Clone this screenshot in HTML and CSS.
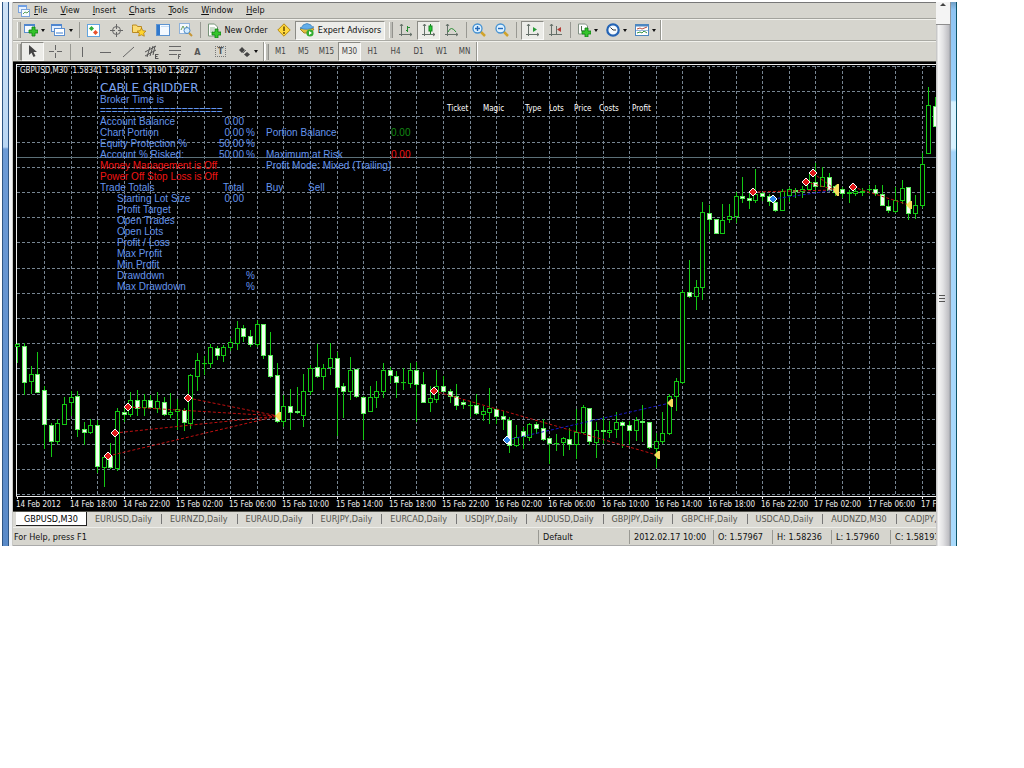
FILE: index.html
```html
<!DOCTYPE html>
<html lang="en">
<head>
<meta charset="utf-8">
<title>GBPUSD,M30</title>
<link rel="stylesheet" href="styles.css">
</head>
<body>
<main class="window">
  <div class="edge edge-left"></div>
  <div class="app">
    <nav class="menu">
      <svg class="menu-logo" width="13" height="13" viewBox="0 0 13 13"><rect x="1.500" y="1.500" width="8" height="7" fill="#e6f1ff" stroke="#7aa3dc"/><rect x="1" y="1" width="9" height="2" fill="#6f9fe4"/><rect x="4.500" y="5.500" width="8" height="7" fill="#f6faff" stroke="#7aa3dc"/><path d="M6 10l2-2 2 1 2-2" stroke="#58a05a" fill="none"/></svg>
      <button><u>F</u>ile</button><button><u>V</u>iew</button><button><u>I</u>nsert</button><button><u>C</u>harts</button><button><u>T</u>ools</button><button><u>W</u>indow</button><button><u>H</u>elp</button>
    </nav>
    <div class="toolbar">
      <i class="grip"></i>
      <button class="tool w26" aria-label="New chart"><svg width="14" height="14" viewBox="0 0 14 14"><rect x=".5" y="1.500" width="10" height="8" fill="#f4f9ff" stroke="#5c8fd0"/><path d="M0 2h11" stroke="#4f86cf" stroke-width="2"/><path d="M8 4h3v3h3v3h-3v3H8v-3H5V7h3z" fill="#35c42b" stroke="#0d7d12" stroke-width=".8"/></svg><i class="caret"></i></button>
      <button class="tool w29" aria-label="Profiles"><svg width="15" height="14" viewBox="0 0 15 14"><rect x=".5" y="1.500" width="10" height="7" fill="#e3efff" stroke="#5c8fd0"/><path d="M0 2h11" stroke="#4f86cf" stroke-width="2"/><rect x="3.500" y="5.500" width="10" height="7" fill="#fff" stroke="#5c8fd0"/><path d="M5 10h7" stroke="#9fc0e8" stroke-width="2"/></svg><i class="caret"></i></button>
      <i class="sep"></i>
      <button class="tool" aria-label="Market watch"><svg width="13" height="13" viewBox="0 0 13 13"><rect x=".5" y=".5" width="12" height="12" fill="#fff" stroke="#62a5df"/><path d="M4.500 2L7 4.500 4.500 7 2 4.500z" fill="#2fae3a"/><path d="M8.500 6L11 8.500 8.500 11 6 8.500z" fill="#e8502c"/></svg></button>
      <button class="tool" aria-label="Data window"><svg width="13" height="13" viewBox="0 0 13 13" fill="none" stroke="#666"><circle cx="6.500" cy="6.500" r="4"/><path d="M6.500 0v5M6.500 8v5M0 6.500h5M8 6.500h5"/></svg></button>
      <button class="tool" aria-label="Navigator"><svg width="15" height="13" viewBox="0 0 15 13"><path d="M.5 2.500V1h4l1 1.500h4v6h-9z" fill="#fbdc74" stroke="#ba8a22"/><path d="M9.500 4l1.400 2.700 3 .4-2.200 2.100.6 3-2.800-1.400L6.700 12l.6-2.900-2.100-2 3-.4z" fill="#ffd52e" stroke="#b07e12" stroke-width=".8"/></svg></button>
      <button class="tool" aria-label="Terminal"><svg width="14" height="12" viewBox="0 0 14 12"><rect x=".5" y=".5" width="13" height="11" fill="#f4f9ff" stroke="#5c93d0"/><rect x="1" y="1" width="3" height="10" fill="#3179cc"/><path d="M5 2.500h8" stroke="#c3dbf5"/></svg></button>
      <button class="tool" aria-label="Strategy tester"><svg width="14" height="14" viewBox="0 0 14 14"><rect x=".5" y=".5" width="10" height="10" fill="#f3f8ff" stroke="#8fb2da"/><path d="M2 7l2-4 2 4 2-4" stroke="#6ea05c" fill="none"/><circle cx="8" cy="7.500" r="3" fill="#d5edff" stroke="#4c8ac6"/><path d="M10 10l3 3" stroke="#c69636" stroke-width="2"/></svg></button>
      <i class="sep"></i>
      <button class="tool w69"><svg width="14" height="15" viewBox="0 0 14 15"><path d="M1.500 1h6l3 3v9h-9z" fill="#fff" stroke="#779378"/><path d="M3 5h5M3 7h4M3 9h3" stroke="#95b896"/><path d="M8 6h3v3h3v3h-3v3H8v-3H5V9h3z" fill="#35c42b" stroke="#0d7d12" stroke-width=".8"/></svg>New Order</button>
      <button class="tool" aria-label="MetaEditor"><svg width="14" height="14" viewBox="0 0 14 14"><path d="M7 .8L13.200 7 7 13.200.8 7z" fill="#ffd93e" stroke="#b98b10"/><path d="M7 3.500v4.500M7 9v2" stroke="#654900" stroke-width="1.500"/></svg></button>
      <button class="tool pressed w87"><svg width="16" height="14" viewBox="0 0 16 14"><path d="M1 6l7-2 7 2-3 4H5z" fill="#e4bf40" stroke="#a98722"/><path d="M1 5q3-1 3-3 4-3 8 0 0 2 3 2-6 4-14 1z" fill="#62aeea" stroke="#347cb9" stroke-width=".7"/><circle cx="11" cy="10" r="3.600" fill="#35ad31"/><path d="M10 8l3 2-3 2z" fill="#fff"/></svg>Expert Advisors</button>
      <i class="grip spaced"></i>
      <button class="tool" aria-label="Bar chart"><svg width="13" height="13" viewBox="0 0 13 13" fill="none"><path d="M2.500 0v12M0 10.500h13M1 2l1.500-2L4 2M11 9l2 1.500-2 1.500" stroke="#66716a"/><path d="M8.500 2v6M7 6.500h2M8 3.500h3" stroke="#278d32"/></svg></button>
      <button class="tool pressed" aria-label="Candlesticks"><svg width="13" height="13" viewBox="0 0 13 13" fill="none"><path d="M2.500 0v12M0 10.500h13M1 2l1.500-2L4 2M11 9l2 1.500-2 1.500" stroke="#66716a"/><path d="M8.500 0v10" stroke="#178223"/><rect x="7" y="2" width="3" height="5" fill="#26cf36" stroke="#178223"/></svg></button>
      <button class="tool" aria-label="Line chart"><svg width="13" height="13" viewBox="0 0 13 13" fill="none"><path d="M2.500 0v12M0 10.500h13M1 2l1.500-2L4 2M11 9l2 1.500-2 1.500" stroke="#66716a"/><path d="M3 8q3-7 8 0" stroke="#278d32"/></svg></button>
      <i class="sep narrow"></i>
      <button class="tool" aria-label="Zoom in"><svg width="14" height="14" viewBox="0 0 14 14"><path d="M8 8l5 5" stroke="#d0a32c" stroke-width="2.500"/><circle cx="5.500" cy="5.500" r="4.500" fill="#dff2ff" stroke="#4692d2" stroke-width="1.300"/><path d="M3 5.500h5M5.500 3v5" stroke="#246aba" stroke-width="1.400"/></svg></button>
      <button class="tool" aria-label="Zoom out"><svg width="14" height="14" viewBox="0 0 14 14"><path d="M8 8l5 5" stroke="#d0a32c" stroke-width="2.500"/><circle cx="5.500" cy="5.500" r="4.500" fill="#dff2ff" stroke="#4692d2" stroke-width="1.300"/><path d="M3 5.500h5" stroke="#246aba" stroke-width="1.400"/></svg></button>
      <i class="sep wide-sep"></i>
      <button class="tool pressed" aria-label="Auto scroll"><svg width="13" height="13" viewBox="0 0 13 13" fill="none"><path d="M2.500 0v12M0 10.500h13M1 2l1.500-2L4 2M11 9l2 1.500-2 1.500" stroke="#66716a"/><path d="M7 3l4 2.500L7 8z" fill="#279b36"/></svg></button>
      <button class="tool" aria-label="Chart shift"><svg width="13" height="13" viewBox="0 0 13 13" fill="none"><path d="M2.500 0v12M0 10.500h13M1 2l1.500-2L4 2M7.500 2v8" stroke="#66716a"/><path d="M12 3v5L8 5.500z" fill="#b33c35"/></svg></button>
      <i class="sep"></i>
      <button class="tool w29" aria-label="Indicators"><svg width="14" height="14" viewBox="0 0 14 14"><path d="M1.500 1h7l2 2v8h-9z" fill="#fff" stroke="#829184"/><path d="M4.500 3v5h3" fill="none" stroke="#4b6f4c"/><path d="M8 5h3v3h3v3h-3v3H8v-3H5V8h3z" fill="#35c42b" stroke="#0d7d12" stroke-width=".8"/></svg><i class="caret"></i></button>
      <button class="tool w29" aria-label="Periods"><svg width="14" height="14" viewBox="0 0 14 14"><circle cx="7" cy="7" r="5.700" fill="#f5fbff" stroke="#2464b5" stroke-width="2.200"/><path d="M4.500 4.500L7 7h3" fill="none" stroke="#333"/></svg><i class="caret"></i></button>
      <button class="tool w29" aria-label="Templates"><svg width="14" height="12" viewBox="0 0 14 12"><rect x=".5" y=".5" width="13" height="11" fill="#fff" stroke="#4c87c1"/><path d="M0 1.500h14" stroke="#4c87c1" stroke-width="2"/><path d="M2 5l3-1 2 1 5-2" stroke="#b65042" fill="none"/><path d="M2 9l3-1 2 1 2-2 3 2" stroke="#369242" fill="none"/><path d="M1 6.500h12" stroke="#98b9dc"/></svg><i class="caret"></i></button>
      <i class="bar-end"></i>
    </div>
    <div class="toolbar second">
      <i class="grip"></i>
      <button class="tool pressed" aria-label="Cursor"><svg width="10" height="13" viewBox="0 0 10 13"><path d="M1 0v10l2.500-2.300L5.500 12l2-1-2-4H9z" fill="#444"/></svg></button>
      <button class="tool" aria-label="Crosshair"><svg width="13" height="13" viewBox="0 0 13 13"><path d="M6.500 0v5M6.500 8v5M0 6.500h5M8 6.500h5" stroke="#666"/></svg></button>
      <i class="sep narrow"></i>
      <button class="tool" aria-label="Vertical line"><svg width="11" height="12"><path d="M5.500 1v10" stroke="#666"/></svg></button>
      <button class="tool" aria-label="Horizontal line"><svg width="11" height="12"><path d="M0 6.500h11" stroke="#666"/></svg></button>
      <button class="tool" aria-label="Trendline"><svg width="11" height="12"><path d="M0 11L11 1" stroke="#666"/></svg></button>
      <button class="tool" aria-label="Equidistant channel"><svg width="14" height="14" viewBox="0 0 14 14"><path d="M0 7l11-6M0 11l11-6M2 12L5 2M5 11L8 1M8 10l2-9M10.500 9.500h3M10.500 11.500h2M10.500 13.500h3M10.500 9v5" stroke="#555" fill="none"/></svg></button>
      <button class="tool" aria-label="Fibonacci"><svg width="14" height="14" viewBox="0 0 14 14"><path d="M1 1.500h12M1 5.500h12M1 9.500h8M10.500 9v5M10 9.500h3M10 11.500h2" stroke="#666"/></svg></button>
      <button class="tool letter">A</button>
      <button class="tool letter"><span class="label-box">T</span></button>
      <button class="tool w31" aria-label="Arrows"><svg width="13" height="12" viewBox="0 0 13 12"><path d="M4 1l3 3-3 3-3-3zM9 6l3 2.500L9 11 6 8.500z" fill="#444"/><path d="M5 7l3-3" stroke="#666"/></svg><i class="caret"></i></button>
      <i class="bar-end"></i><i class="grip tight"></i>
      <button class="tool period">M1</button><button class="tool period">M5</button><button class="tool period">M15</button><button class="tool period pressed">M30</button><button class="tool period">H1</button><button class="tool period">H4</button><button class="tool period">D1</button><button class="tool period">W1</button><button class="tool period">MN</button>
      <i class="bar-end"></i>
    </div>
    <section class="chart">
      <svg id="plot" class="plot" width="100%" height="449" aria-label="GBPUSD M30 candlestick chart"></svg>
      <div class="quote">GBPUSD,M30&nbsp; 1.58341 1.58381 1.58190 1.58227</div>
      <div class="advisor">
        <div class="advisor-title">CABLE GRIDDER</div>
        <div class="line">Broker Time is</div>
        <div class="line">=====================</div>
        <div class="row"><span>Account Balance</span><span class="num">0.00</span></div>
        <div class="row"><span>Chart Portion</span><span class="num">0.00</span><span class="pct">%</span><span class="wide">Portion Balance</span><span class="green">0.00</span></div>
        <div class="row"><span>Equity Protection %</span><span class="num">50.00</span><span class="pct">%</span></div>
        <div class="row"><span>Account % Risked:</span><span class="num">50.00</span><span class="pct">%</span><span class="wide">Maximum at Risk</span><span class="red">0.00</span></div>
        <div class="row"><span class="red">Money Management is Off</span><span></span><span></span><span class="wide">Profit Mode: Mixed (Trailing)</span></div>
        <div class="row"><span class="red">Power Off Stop Loss is Off</span></div>
        <div class="row"><span>Trade Totals</span><span class="num">Total</span><span></span><span>Buy</span><span>Sell</span></div>
        <div class="row"><span class="sub">Starting Lot Size</span><span class="num">0.00</span></div>
        <div class="row"><span class="sub">Profit Target</span></div>
        <div class="row"><span class="sub">Open Trades</span></div>
        <div class="row"><span class="sub">Open Lots</span></div>
        <div class="row"><span class="sub">Profit / Loss</span></div>
        <div class="row"><span class="sub">Max Profit</span></div>
        <div class="row"><span class="sub">Min Profit</span></div>
        <div class="row"><span class="sub">Drawdown</span><span></span><span class="pct">%</span></div>
        <div class="row"><span class="sub">Max Drawdown</span><span></span><span class="pct">%</span></div>
      </div>
      <div class="orders"><span>Ticket</span><span>Magic</span><span>Type</span><span>Lots</span><span>Price</span><span>Costs</span><span>Profit</span></div>
    </section>
    <div class="tabs">
      <button class="tab active">GBPUSD,M30</button><button class="tab">EURUSD,Daily</button><button class="tab">EURNZD,Daily</button><button class="tab">EURAUD,Daily</button><button class="tab">EURJPY,Daily</button><button class="tab">EURCAD,Daily</button><button class="tab">USDJPY,Daily</button><button class="tab">AUDUSD,Daily</button><button class="tab">GBPJPY,Daily</button><button class="tab">GBPCHF,Daily</button><button class="tab">USDCAD,Daily</button><button class="tab">AUDNZD,M30</button><button class="tab">CADJPY,Daily</button>
    </div>
    <footer class="status">
      <span class="help">For Help, press F1</span><span class="cell profile">Default</span><span class="cell date">2012.02.17 10:00</span><span class="cell">O: 1.57967</span><span class="cell">H: 1.58236</span><span class="cell">L: 1.57960</span><span class="cell last">C: 1.58191</span>
    </footer>
  </div>
  <div class="scroll">
    <svg class="scroll-up" width="14" height="22"><path d="M4 4h6L7 1z" fill="#444"/></svg>
    <div class="thumb"><i></i><i></i><i></i></div>
  </div>
  <div class="edge edge-right"></div>
</main>
<script src="chart.js"></script>
</body>
</html>
```
FILE: styles.css
```css
* { box-sizing: border-box; }
body { margin: 0; background: #fff; font-family: "DejaVu Sans Condensed", "DejaVu Sans", sans-serif; font-size: 9px; color: #111; }
button { font: inherit; color: inherit; background: none; border: 0; padding: 0; margin: 0; white-space: nowrap; }
.window { display: flex; margin: 2px 67px 0 2px; }
.edge-left { width: 11px; flex: none; border-right: 1px solid #c9c9c5; background: linear-gradient(90deg, #2f5684 0 1px, transparent 1px 6px, #2f5684 6px 7px, #f1f3f5 7px), linear-gradient(#cfe2f6 0, #b9d6f3 145px, #6d9bd6 147px, #5a8ac8); }
.edge-right { width: 7px; flex: none; background: linear-gradient(90deg, #8f97a0 0 1px, transparent 1px 6px, #0c5468 6px), linear-gradient(#6f9dc4 0, #8fc4f2 8px, #9cd2fb 98px, #d8f2ff 100px, #d8f2ff 146px, #a4d4fa 150px, #a9dafc); }
.app { flex: 1; min-width: 0; overflow: hidden; background: #d6d5ce; border-top: 1px solid #777; }
.menu { display: flex; align-items: center; gap: 13px; height: 16px; padding: 0 0 1px 4px; border-bottom: 1px solid #a3a39d; }
.menu-logo { margin-right: -9px; }
.toolbar { display: flex; align-items: center; height: 22px; padding-left: 4px; border-top: 1px solid #f1f1ec; border-bottom: 1px solid #aaaaa4; }
.toolbar.second { height: 20px; border-bottom: 0; }
.grip { flex: none; width: 4px; height: 16px; background: #bcbcb6; border-left: 1px solid #f8f8f5; border-right: 1px solid #92928d; }
.grip.spaced { margin: 0 1px 0 4px; }
.grip.tight { margin: 0; }
.sep { flex: none; width: 6px; height: 16px; border-left: 1px solid #999993; margin-left: 3px; margin-right: -3px; }
.sep.narrow { width: 4px; }
.sep.wide-sep { width: 8px; }
.bar-end { flex: none; width: 2px; height: 20px; border-left: 1px solid #96968f; border-right: 1px solid #fff; }
.tool { flex: none; display: flex; align-items: center; justify-content: center; gap: 3px; width: 23px; height: 19px; }
.tool.pressed { background: #ecece8; border: 1px solid #fafaf8; border-top-color: #8b8b85; border-left-color: #8b8b85; }
.w26 { width: 26px; }
.w29 { width: 29px; }
.w31 { width: 31px; }
.w69 { width: 69px; }
.w87 { width: 90px; }
.caret { border: 2px solid transparent; border-top: 3px solid #111; border-bottom: 0; }
.period { font-size: 8px; color: #444; }
.letter { font-size: 9px; font-weight: bold; color: #555; }
.label-box { border: 1px dotted #777; width: 11px; height: 11px; line-height: 9px; }
.chart { position: relative; overflow: hidden; background: #000; border-top: 1px solid #55554f; }
.plot { display: block; }
.quote { position: absolute; left: 7px; top: 4px; color: #eee; font-size: 8px; line-height: 10px; white-space: nowrap; }
.advisor { position: absolute; left: 87px; top: 21px; color: #6495ed; font-family: "Liberation Sans", Arial, sans-serif; font-size: 10px; line-height: 11px; white-space: nowrap; }
.advisor-title { font-family: "DejaVu Sans", sans-serif; font-size: 12px; color: #7ba4f2; }
.row { display: grid; grid-template-columns: 116px 28px 22px 42px 83px 30px; height: 11px; }
.num { text-align: right; }
.pct { padding-left: 2px; }
.wide { grid-column: span 2; }
.sub { padding-left: 17px; }
.red { color: #f01414; }
.green { color: #128a12; }
.orders { position: absolute; left: 434px; top: 42px; display: grid; grid-template-columns: 36px 42px 24px 25px 25px 33px 30px; color: #fff; font-size: 8px; line-height: 10px; }
.tabs { display: flex; height: 17px; padding-left: 3px; border-top: 1px solid #55554f; border-bottom: 1px solid #eeeeea; color: #55554f; background: #dad9d3; overflow: hidden; }
.tab { flex: none; height: 14px; padding: 0 10px 0 8px; position: relative; }
.tab + .tab::after { content: ""; position: absolute; right: 0; top: 2px; height: 10px; border-right: 1px solid #777; }
.tab.active { background: #fff; color: #000; border-right: 1px solid #222; border-bottom: 1px solid #222; padding-right: 8px; }
.status { display: flex; align-items: center; height: 18px; white-space: nowrap; border-bottom: 1px solid #aaa; }
.help { flex: 1; padding-left: 1px; }
.cell { flex: none; width: 59px; line-height: 14px; padding-left: 4px; border-left: 1px solid #999993; overflow: hidden; }
.profile { width: 91px; }
.date { width: 84px; }
.last { width: 46px; }
.scroll { width: 14px; flex: none; display: flex; flex-direction: column; background: #f4f4f4; }
.scroll-up { display: block; flex: none; }
.thumb { flex: 1; display: flex; flex-direction: column; align-items: center; justify-content: center; gap: 1px; padding-right: 2px; padding-top: 27px; border-top: 1px solid #8d8d8d; background: linear-gradient(90deg, #c8c8c8 0 1px, #f6f6f6 2px, #e2e2e4 7px, #bdbdc2 13px, #989da5); }
.thumb i { width: 6px; height: 2px; border-top: 1px solid #555; }
.grid-line { stroke: #778592; stroke-dasharray: 3 2; fill: none; }
.price-line { stroke: #5c7078; }
.axis { stroke: #eee; fill: none; }
.axis-label { fill: #eee; font-size: 8px; }
.wick { stroke: #14c814; }
.bull { fill: #000; stroke: #14c814; }
.bear { fill: #f4fff0; stroke: #5cec5c; }
.trade-red { stroke: #c01010; stroke-dasharray: 3 2; }
.trade-blue { stroke: #1818c4; stroke-dasharray: 3 2; }
.mark { stroke: #fff; }
.sell { fill: #e01818; }
.buy { fill: #2b83e6; }
.close { fill: #f7dc5c; }
```
FILE: chart.js
```js
const NS = "http://www.w3.org/2000/svg";
const ORIGIN_X = 13, ORIGIN_Y = 62;
const svg = document.getElementById("plot");
const layer = document.createElementNS(NS, "g");
layer.setAttribute("transform", `translate(${-ORIGIN_X} ${-ORIGIN_Y})`);
svg.appendChild(layer);

function draw(tag, cls, attrs, text) {
  const node = document.createElementNS(NS, tag);
  node.setAttribute("class", cls);
  for (const key in attrs) node.setAttribute(key, attrs[key]);
  if (text) node.textContent = text;
  layer.appendChild(node);
}
const path = (cls, d) => draw("path", cls, { d });

// Each bar: kind (f falling, h rising), high, body top, body bottom, low.
const bars = `h343,344,346,362 f343,346,382,394 h366,374,381,393 f352,374,392,392 f386,390,424,448 f423,425,441,456 h419,423,441,443 h397,404,424,424 h391,397,402,415 f391,396,429,436
f422,429,432,444 h419,425,432,433 f420,425,466,472 h456,457,467,486 f443,456,467,468 h408,411,468,470 f406,412,414,421 h392,400,414,416 f390,400,408,415 h394,400,407,415
f395,400,407,408 h392,401,408,412 f397,402,414,415 h393,412,414,417 h399,409,411,429 f408,410,422,430 h374,375,423,428 h353,360,376,390 h356,363,363,374 h344,347,363,367
f346,348,355,359 h345,347,355,361 h338,342,347,350 h321,328,343,349 f325,328,336,341 f330,336,344,346 h320,324,344,346 f324,324,355,358 f332,355,376,377 f363,375,421,422
h395,406,421,426 f389,406,412,429 f387,411,412,413 h374,391,415,426 h365,368,391,394 f344,367,376,377 h364,368,376,389 h343,358,367,374 f352,358,387,435 f383,386,391,417
h357,370,391,399 f369,369,396,397 f396,397,413,439 h386,397,411,411 h381,391,397,407 h363,370,391,397 f367,370,375,382 f371,376,382,397 h368,382,382,389 h363,370,383,387
f362,370,384,421 f372,384,402,402 h386,398,402,411 h370,386,399,402 f376,386,391,391 f389,391,396,402 f384,396,405,409 f399,402,404,408 h401,405,405,416 f394,405,413,414
h406,411,414,420 h388,408,412,423 f408,409,416,423 f411,416,419,429 f417,420,445,452 h425,437,445,446 f427,431,436,448 h423,424,437,440 f422,424,428,433 f419,428,439,440
f437,438,443,463 h434,443,443,450 h437,438,442,455 f428,439,444,449 h409,432,444,458 h405,407,432,433 f408,408,441,444 h422,430,442,457 f417,430,431,443 h421,430,432,437
h412,422,429,437 f421,422,425,447 f421,425,430,444 h417,420,430,440 f405,421,422,441 f422,422,447,448 h433,441,448,467 h412,433,441,443 h394,396,433,434 h378,381,396,410
h290,292,382,383 f260,292,296,297 h280,287,296,309 h202,212,287,299 f205,213,219,231 f219,219,233,233 h204,220,233,233 h204,216,219,222 h192,196,216,222 f177,196,198,202
f193,198,200,208 h169,194,200,202 f192,193,196,200 f194,196,201,205 f198,202,210,211 h189,191,210,210 h187,189,195,201 f188,190,191,197 h186,189,191,197 h172,182,189,189
f163,182,186,191 h167,177,186,186 f173,177,190,191 f185,186,192,195 f187,189,193,197 h190,192,193,202 h187,191,193,195 h188,191,192,195 h185,189,189,193 f185,189,193,195
f185,194,205,205 f200,206,210,212 h187,200,211,212 h180,188,200,203 f187,187,213,219 h195,205,213,218 h153,164,205,207 h87,105,153,153 f97,106,126,126`.split(/\s+/);

const column = i => Math.round(17.3 + i * 6.65);

for (let k = 1; k <= 34; k++) path("grid-line", `M${column(k * 4) + 0.5} 66V496`);
for (let k = 0; k < 18; k++) path("grid-line", `M17 ${Math.round(66 + k * 25.2) + 0.5}H960`);
path("price-line", "M17 157.5H960");
path("axis", "M16.5 65V496.5H960");
path("axis", "M16 64.5H960");

bars.forEach((bar, i) => {
  const [high, top, bottom, low] = bar.slice(1).split(",").map(Number);
  const x = column(i);
  path("wick", `M${x + 0.5} ${high}V${low + 1}`);
  draw("rect", bar[0] === "f" ? "bear" : "bull", { x: x - 1.5, y: top + 0.5, width: 4, height: Math.max(bottom - top, 0.1) });
});

const times = ["14 Feb 2012", "14 Feb 18:00", "14 Feb 22:00", "15 Feb 02:00", "15 Feb 06:00", "15 Feb 10:00", "15 Feb 14:00", "15 Feb 18:00", "15 Feb 22:00", "16 Feb 02:00", "16 Feb 06:00", "16 Feb 10:00", "16 Feb 14:00", "16 Feb 18:00", "16 Feb 22:00", "17 Feb 02:00", "17 Feb 06:00", "17 Feb 10:00"];
times.forEach((label, k) => {
  const x = column(k * 8);
  path("axis", `M${x + 0.5} 496V499`);
  draw("text", "axis-label", { x: x - 1, y: 507 }, label);
});

path("trade-red", "M108 456L278 416M115 433L278 416M128 407L278 416M188 398L278 416M434 391L657 455M753 192L836 190M806 182L836 190M813 173L836 190M853 187L909 205");
path("trade-blue", "M507 440L670 403M773 199L836 190");
const diamond = (x, y) => `M${x - 4} ${y}L${x} ${y - 4}L${x + 4} ${y}L${x} ${y + 4}Z`;
[[108, 456], [115, 433], [128, 407], [188, 398], [434, 391], [753, 192], [806, 182], [813, 173], [853, 187]].forEach(p => path("mark sell", diamond(...p)));
[[507, 440], [773, 199]].forEach(p => path("mark buy", diamond(...p)));
[[275, 416, 4], [654, 455, 4], [667, 403, 4], [833, 190, 6], [906, 205, 4]].forEach(([x, y, r]) => path("close", `M${x} ${y}L${x + 4} ${y - r}H${x + 6}V${y + r}H${x + 4}Z`));
```
